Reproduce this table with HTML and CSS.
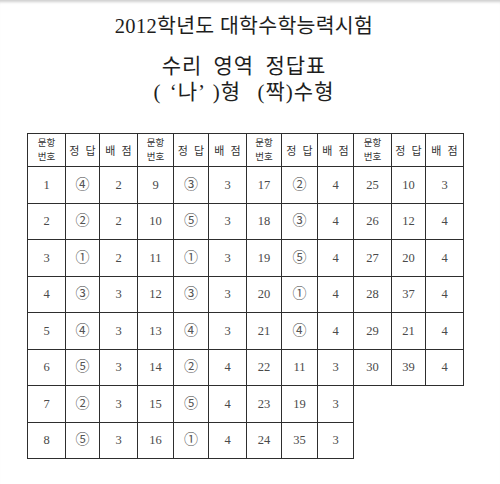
FILE: index.html
```html
<!DOCTYPE html>
<html lang="ko">
<head>
<meta charset="utf-8">
<link rel="stylesheet" href="styles.css">
</head>
<body>
<div class="page">
  <h1 class="t1">2012학년도 대학수학능력시험</h1>
  <h2 class="t2">수리 영역 정답표</h2>
  <h2 class="t3">( ‘나’ )형 &nbsp;(짝)수형</h2>
  <table class="grid">
    <colgroup>
      <col class="c1"><col class="c2"><col class="c3">
      <col class="c4"><col class="c5"><col class="c6">
      <col class="c7"><col class="c8"><col class="c9">
      <col class="c10"><col class="c11"><col class="c12">
    </colgroup>
    <tr class="head">
      <th class="no">문항<br>번호</th><th>정 답</th><th>배 점</th>
      <th class="no">문항<br>번호</th><th>정 답</th><th>배 점</th>
      <th class="no">문항<br>번호</th><th>정 답</th><th>배 점</th>
      <th class="no">문항<br>번호</th><th>정 답</th><th>배 점</th>
    </tr>
    <tr><td>1</td><td class="ci">④</td><td>2</td><td>9</td><td class="ci">③</td><td>3</td><td>17</td><td class="ci">②</td><td>4</td><td>25</td><td>10</td><td>3</td></tr>
    <tr><td>2</td><td class="ci">②</td><td>2</td><td>10</td><td class="ci">⑤</td><td>3</td><td>18</td><td class="ci">③</td><td>4</td><td>26</td><td>12</td><td>4</td></tr>
    <tr><td>3</td><td class="ci">①</td><td>2</td><td>11</td><td class="ci">①</td><td>3</td><td>19</td><td class="ci">⑤</td><td>4</td><td>27</td><td>20</td><td>4</td></tr>
    <tr><td>4</td><td class="ci">③</td><td>3</td><td>12</td><td class="ci">③</td><td>3</td><td>20</td><td class="ci">①</td><td>4</td><td>28</td><td>37</td><td>4</td></tr>
    <tr><td>5</td><td class="ci">④</td><td>3</td><td>13</td><td class="ci">④</td><td>3</td><td>21</td><td class="ci">④</td><td>4</td><td>29</td><td>21</td><td>4</td></tr>
    <tr><td>6</td><td class="ci">⑤</td><td>3</td><td>14</td><td class="ci">②</td><td>4</td><td>22</td><td>11</td><td>3</td><td>30</td><td>39</td><td>4</td></tr>
    <tr><td>7</td><td class="ci">②</td><td>3</td><td>15</td><td class="ci">⑤</td><td>4</td><td>23</td><td>19</td><td>3</td></tr>
    <tr><td>8</td><td class="ci">⑤</td><td>3</td><td>16</td><td class="ci">①</td><td>4</td><td>24</td><td>35</td><td>3</td></tr>
  </table>
</div>
</body>
</html>
```

FILE: styles.css
```css
html, body {
  margin: 0;
  padding: 0;
  background: #fff;
}
body {
  width: 500px;
  height: 484px;
  overflow: hidden;
  font-family: "Liberation Serif", "Noto Sans CJK KR", serif;
  color: #222;
}
.page {
  position: relative;
  width: 500px;
  height: 484px;
  box-shadow: inset 0 4px 3px -2px #cfcfcf;
  padding-top: 13px;
  box-sizing: border-box;
}
.t1, .t2, .t3 {
  margin: 0;
  font-weight: normal;
  text-align: center;
  padding-right: 12px;
  color: #1e1e1e;
}
.t1 {
  font-size: 20.5px;
  line-height: 26px;
  letter-spacing: 0.3px;
}
.t2 {
  margin-top: 14px;
  font-size: 21px;
  line-height: 26px;
  word-spacing: 5px;
  letter-spacing: 1px;
}
.t3 {
  margin-top: 0;
  font-size: 21px;
  line-height: 26px;
  letter-spacing: 1px;
  word-spacing: 2px;
}
.grid {
  margin-top: 28px;
  margin-left: 27px;
  border-collapse: collapse;
  table-layout: fixed;
  width: 436px;
}
.c1, .c3, .c6, .c10, .c12 { width: 38px; }
.c2, .c11 { width: 34px; }
.c4, .c8, .c9 { width: 36px; }
.c5, .c7 { width: 35px; }
.grid th, .grid td {
  border: 1.5px solid #2e2e2e;
  text-align: center;
  vertical-align: middle;
  padding: 0;
}
.grid th {
  height: 32px;
  font-family: "Noto Sans CJK KR", sans-serif;
  font-weight: normal;
  font-size: 11px;
  color: #333;
  word-spacing: 3px;
}
.grid th.no {
  font-size: 9.5px;
  line-height: 13.8px;
  word-spacing: 0;
}
.grid td {
  height: 35.5px;
  font-size: 12.5px;
  line-height: 16px;
  color: #4a4a4a;
}
.grid td.ci {
  font-size: 14px;
  color: #555;
}
```
